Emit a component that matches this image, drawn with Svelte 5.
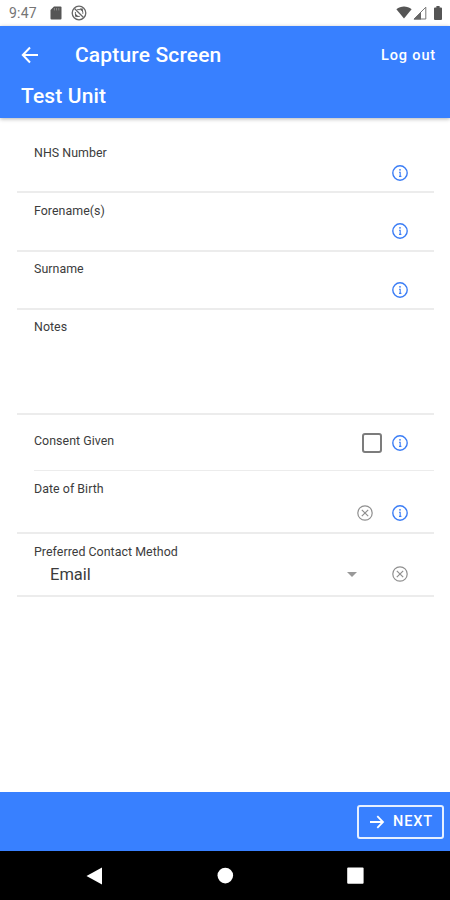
<script>
    let consentGiven = $state(false);

    const textFields = [
        { label: 'NHS Number' },
        { label: 'Forename(s)' },
        { label: 'Surname' }
    ];
</script>

{#snippet infoIcon()}
    <svg class="icon info" viewBox="0 0 18 18">
        <circle cx="9" cy="9" r="7.2" />
        <path class="stem" d="M8 8.2h1.2v4.2M8 12.4h2.4" />
        <circle class="dot" cx="9" cy="5.8" r="0.9" />
    </svg>
{/snippet}

{#snippet clearIcon()}
    <svg class="icon clear" viewBox="0 0 18 18">
        <circle cx="9" cy="9" r="7.2" />
        <path d="M5.8 5.8l6.4 6.4M12.2 5.8l-6.4 6.4" />
    </svg>
{/snippet}

<div class="screen">
    <div class="status-bar">
        <span class="time">9:47</span>
        <svg class="sd-card" viewBox="0 0 12 14">
            <path d="M4 0.5h6.5a1 1 0 0 1 1 1v11a1 1 0 0 1-1 1h-9a1 1 0 0 1-1-1V4z" fill="#555" />
            <path d="M4.4 2v2.4M6.6 2v2.4M8.8 2v2.4" stroke="#999" stroke-width="0.8" />
        </svg>
        <svg class="sync" viewBox="0 0 16 16" fill="none" stroke="#666">
            <circle cx="8" cy="8" r="6.8" stroke-width="1.3" />
            <path d="M3.5 3.5l9 9" stroke-width="1.3" />
            <path d="M6.2 4.6h3.2a2.6 2.6 0 0 1 2.4 2.6v1.6M4.4 7v1.8a2.6 2.6 0 0 0 2.6 2.6h1.8" stroke-width="1" />
            <path d="M8.6 3.6h3.2v3.2zM4.2 8.4v3.4h3.4z" fill="#555" stroke="none" />
        </svg>
        <span class="gap"></span>
        <svg class="wifi" viewBox="0 0 16 13">
            <path d="M0.4 3.2C4.8-.5 11.2-.5 15.6 3.2L8 12.6z" fill="#555" />
        </svg>
        <svg class="signal" viewBox="0 0 14 14">
            <path d="M1 13L12.8 1.2V13z" fill="none" stroke="#777" stroke-width="1" />
            <path d="M0.5 13.4L8 6v7.4z" fill="#666" />
        </svg>
        <svg class="battery" viewBox="0 0 8 14">
            <path d="M2.4 0h3.2v1.4H7a1 1 0 0 1 1 1V13a1 1 0 0 1-1 1H1a1 1 0 0 1-1-1V2.4a1 1 0 0 1 1-1h1.4z" fill="#555" />
        </svg>
    </div>

    <header>
        <div class="toolbar">
            <button class="back" aria-label="Back">
                <svg viewBox="0 0 18 18">
                    <path d="M9 1.5L1.8 9 9 16.5M2 9h15" />
                </svg>
            </button>
            <h1>Capture Screen</h1>
            <button class="logout">Log out</button>
        </div>
        <h2>Test Unit</h2>
    </header>

    <main>
        {#each textFields as field}
            <div class="row text-row">
                <span class="label">{field.label}</span>
                <div class="actions">{@render infoIcon()}</div>
            </div>
        {/each}

        <div class="row notes-row">
            <span class="label">Notes</span>
        </div>

        <div class="row consent-row">
            <span class="label">Consent Given</span>
            <div class="actions">
                <button
                    class="checkbox"
                    role="checkbox"
                    aria-checked={consentGiven}
                    aria-label="Consent Given"
                    onclick={() => (consentGiven = !consentGiven)}
                >
                    {#if consentGiven}
                        <svg viewBox="0 0 16 16"><path d="M3 8l3.5 3.5L13 4.5" /></svg>
                    {/if}
                </button>
                {@render infoIcon()}
            </div>
        </div>

        <div class="row date-row">
            <span class="label">Date of Birth</span>
            <div class="actions">
                {@render clearIcon()}
                {@render infoIcon()}
            </div>
        </div>

        <div class="row contact-row">
            <span class="label">Preferred Contact Method</span>
            <div class="select">
                <span class="value">Email</span>
                <span class="caret"></span>
                {@render clearIcon()}
            </div>
        </div>
    </main>

    <footer>
        <button class="next">
            <svg viewBox="0 0 16 16">
                <path d="M8.3 2.2L14 8l-5.7 5.8M14 8H1" />
            </svg>
            NEXT
        </button>
    </footer>

    <nav>
        <svg viewBox="0 0 18 18"><path d="M0.5 9L16 0.6v16.8z" /></svg>
        <svg viewBox="0 0 18 18"><circle cx="9.3" cy="8.6" r="7.8" /></svg>
        <svg viewBox="0 0 18 18"><rect x="1.2" y="0.4" width="16.4" height="16.4" rx="1" /></svg>
    </nav>
</div>

<style>
    .screen {
        display: flex;
        flex-direction: column;
        width: 450px;
        height: 900px;
        overflow: hidden;
        background: #fff;
        font-family: Roboto, sans-serif;
        color: #3c3c3c;
    }

    button {
        padding: 0;
        border: none;
        background: transparent;
        color: inherit;
        font-family: inherit;
    }

    svg {
        display: block;
        flex: none;
    }

    h1,
    h2 {
        margin: 0;
        font-weight: 500;
        font-size: 21px;
        line-height: 24px;
        letter-spacing: 0.15px;
    }

    .status-bar {
        display: flex;
        align-items: center;
        height: 25.5px;
        padding: 0 8px 0 9px;
        box-sizing: border-box;
    }

    .time {
        width: 41px;
        font-size: 14px;
        letter-spacing: 0.2px;
        color: #757575;
    }

    .sd-card {
        width: 12px;
        height: 14px;
    }

    .sync {
        width: 16px;
        height: 16px;
        margin-left: 9px;
    }

    .gap {
        flex: 1;
    }

    .wifi {
        width: 16px;
        height: 13px;
    }

    .signal {
        width: 14px;
        height: 14px;
        margin-left: 1px;
    }

    .battery {
        width: 8px;
        height: 14px;
        margin-left: 7px;
    }

    header {
        position: relative;
        flex: none;
        height: 92.5px;
        box-sizing: border-box;
        padding: 17px 14px 0 21px;
        background: #3880ff;
        color: #fff;
        box-shadow: 0 1px 4px rgba(0, 0, 0, 0.3);
    }

    .toolbar {
        display: flex;
        align-items: center;
        height: 24px;
        margin-bottom: 17px;
    }

    .back svg {
        width: 18px;
        height: 18px;
        fill: none;
        stroke: #fff;
        stroke-width: 2;
    }

    .toolbar h1 {
        flex: 1;
        margin-left: 36px;
    }

    .logout {
        padding-top: 1px;
        font-size: 14.5px;
        font-weight: 500;
        letter-spacing: 0.85px;
    }

    main {
        flex: 1;
        padding: 17px 16px 0 17px;
    }

    .row {
        display: flex;
        box-sizing: border-box;
        padding: 0 25px 0 17px;
        border-bottom: 2px solid #ececec;
    }

    .label {
        flex: 1;
        font-size: 12.4px;
        line-height: 16px;
        letter-spacing: 0.04px;
        white-space: nowrap;
    }

    .actions {
        display: flex;
        align-items: center;
    }

    .text-row {
        height: 58.3px;
        padding-top: 9.6px;
    }

    .text-row .actions {
        align-self: flex-start;
        margin-top: 19.4px;
    }

    .notes-row {
        height: 105px;
        padding-top: 9.6px;
    }

    .consent-row {
        height: 56.5px;
        margin-left: 17px;
        padding-left: 0;
        align-items: center;
        border-bottom-width: 1px;
    }

    .consent-row .label {
        margin-top: -3px;
    }

    .checkbox {
        width: 20px;
        height: 20px;
        box-sizing: border-box;
        margin-right: 9px;
        border: 2px solid #7c7c7c;
        border-radius: 3px;
    }

    .checkbox svg {
        fill: none;
        stroke: #3880ff;
        stroke-width: 2;
    }

    .date-row {
        height: 63px;
        padding-top: 9.6px;
    }

    .date-row .actions {
        align-self: flex-start;
        gap: 17px;
        margin-top: 22.6px;
    }

    .contact-row {
        flex-direction: column;
        height: 62.5px;
        padding-top: 9.6px;
    }

    .contact-row .label {
        flex: none;
    }

    .select {
        display: flex;
        align-items: center;
        height: 29px;
        padding-left: 16px;
    }

    .value {
        flex: 1;
        font-size: 16.5px;
    }

    .caret {
        margin-right: 34px;
        border: 5px solid transparent;
        border-top-color: #999;
        border-bottom: none;
    }

    .icon {
        width: 18px;
        height: 18px;
        fill: none;
        stroke-width: 1.4;
    }

    .info {
        stroke: #3b7df5;
    }

    .info .stem {
        stroke-width: 1.1;
    }

    .info .dot {
        fill: #3b7df5;
        stroke: none;
    }

    .clear {
        stroke: #8f8f8f;
        stroke-width: 1.2;
    }

    footer {
        display: flex;
        flex: none;
        align-items: center;
        justify-content: flex-end;
        height: 59px;
        padding-right: 6px;
        box-sizing: border-box;
        background: #3880ff;
    }

    .next {
        display: flex;
        align-items: center;
        gap: 8px;
        width: 87px;
        height: 34px;
        padding-left: 10px;
        box-sizing: border-box;
        border: 2px solid #e6efff;
        border-radius: 3px;
        color: #fff;
        font-size: 14.5px;
        font-weight: 500;
        letter-spacing: 0.9px;
    }

    .next svg {
        width: 16px;
        height: 16px;
        fill: none;
        stroke: #fff;
        stroke-width: 1.8;
    }

    nav {
        display: flex;
        flex: none;
        justify-content: space-between;
        height: 49px;
        padding: 0 86px;
        box-sizing: border-box;
        align-items: center;
        background: #000;
    }

    nav svg {
        width: 18px;
        height: 18px;
        fill: #fff;
    }
</style>
